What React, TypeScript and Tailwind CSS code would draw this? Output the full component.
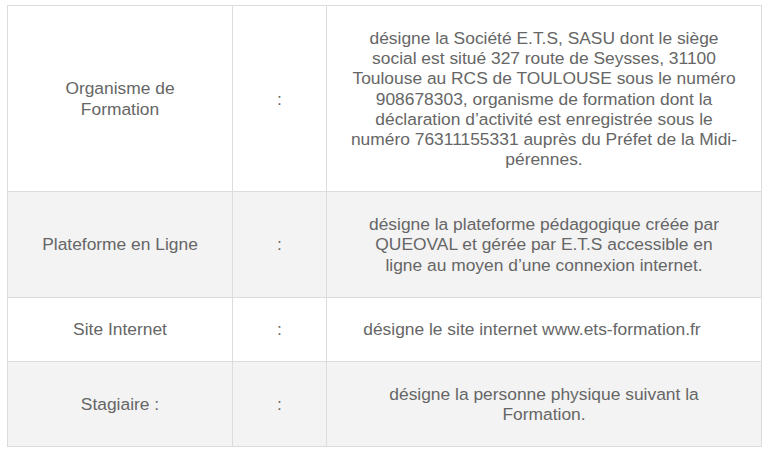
import React from "react";

const NB = "\u00a0";

const rows = [
  {
    label: "Organisme de Formation",
    text: "désigne la Société E.T.S, SASU dont le siège social est situé 327 route de Seysses, 31100 Toulouse au RCS de TOULOUSE sous le numéro 908678303, organisme de formation dont la déclaration d’activité est enregistrée sous le numéro 76311155331 auprès du Préfet de la Midi-pérennes.",
    bg: "bg-white",
    pad: "px-[22px]",
  },
  {
    label: "Plateforme en Ligne",
    text: "désigne la plateforme pédagogique créée par QUEOVAL et gérée par E.T.S accessible en ligne au moyen d’une connexion internet.",
    bg: "bg-[#f3f3f3]",
    pad: "px-[38px]",
  },
  {
    label: "Site Internet",
    text: "désigne le site internet www.ets-formation.fr" + NB.repeat(5),
    bg: "bg-white",
    pad: "px-[22px]",
  },
  {
    label: "Stagiaire :",
    text: "désigne la personne physique suivant la Formation.",
    bg: "bg-[#f3f3f3]",
    pad: "px-[22px]",
  },
];

export default function App() {
  return (
    <div
      className="w-[768px] h-[457px] bg-white pt-[5px] pl-[7px]"
      style={{ fontFamily: '"Liberation Sans", Arial, sans-serif' }}
    >
      <div className="w-[755px] border-t border-l border-[#dcdcdc] text-[17.4px] leading-[20.3px] text-[#666666]">
        {rows.map((r, i) => (
          <div key={i} className={`grid grid-cols-[225px_94px_1fr] ${r.bg}`}>
            <div className="flex items-center justify-center text-center border-r border-b border-[#dcdcdc] px-[20px] py-[21.7px]">
              {r.label}
            </div>
            <div className="flex items-center justify-center border-r border-b border-[#dcdcdc] py-[21.7px]">
              :
            </div>
            <div className={`flex items-center justify-center text-center border-r border-b border-[#dcdcdc] py-[21.7px] ${r.pad}`}>
              {r.text}
            </div>
          </div>
        ))}
      </div>
    </div>
  );
}
